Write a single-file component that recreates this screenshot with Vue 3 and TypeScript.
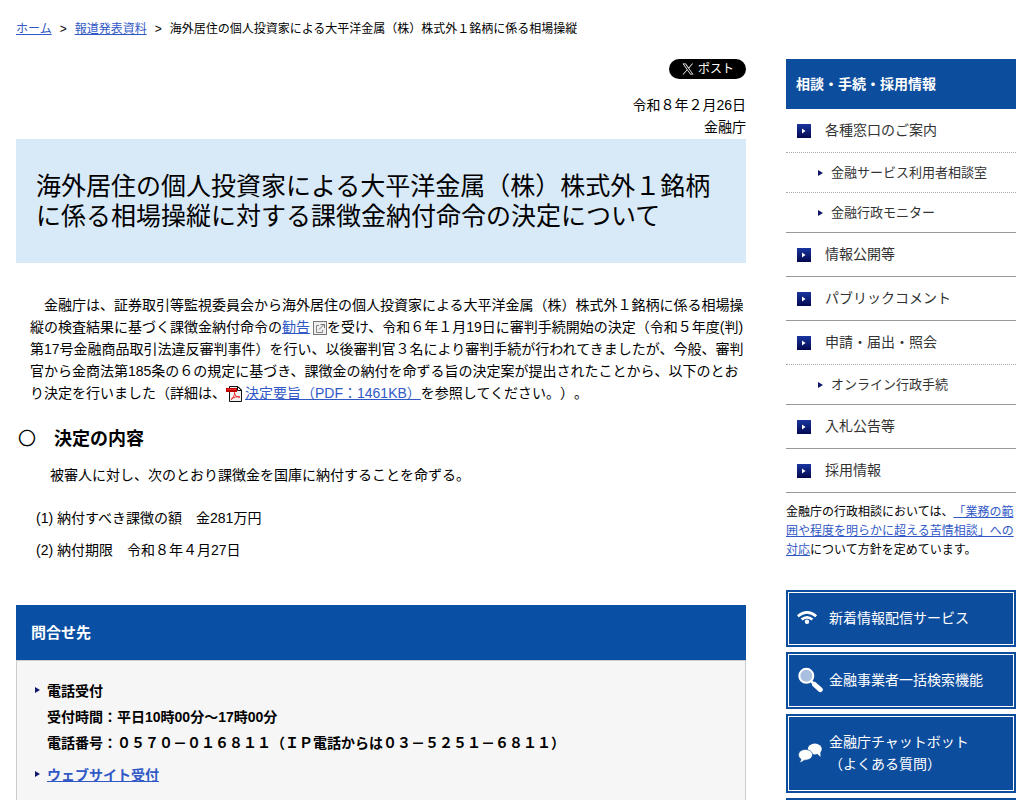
<script setup lang="ts">
interface MenuItem {
  label: string
  children: string[]
}

const menu: MenuItem[] = [
  { label: '各種窓口のご案内', children: ['金融サービス利用者相談室', '金融行政モニター'] },
  { label: '情報公開等', children: [] },
  { label: 'パブリックコメント', children: [] },
  { label: '申請・届出・照会', children: ['オンライン行政手続'] },
  { label: '入札公告等', children: [] },
  { label: '採用情報', children: [] },
]
</script>

<template>
  <div class="page">
    <nav class="crumbs" aria-label="パンくずリスト">
      <a href="#">ホーム</a><span class="sep">&gt;</span><a href="#">報道発表資料</a><span class="sep">&gt;</span><span>海外居住の個人投資家による大平洋金属（株）株式外１銘柄に係る相場操縦</span>
    </nav>

    <div class="columns">
      <main class="main">
        <div class="share">
          <button type="button" class="post">
            <svg viewBox="0 0 24 24" width="12" height="12" aria-hidden="true">
              <path fill="#fff" d="M14.1 10.3 22.3 1h-2l-7.1 8.1L7.6 1H1l8.6 12.3L1 23h2l7.5-8.6 6 8.6H23zM11.4 13.3l-.9-1.2L3.7 2.5h2.9l5.6 7.9.9 1.2 7.2 10.1h-3z" />
            </svg>
            <span>ポスト</span>
          </button>
        </div>

        <p class="date">令和８年２月26日<br />金融庁</p>

        <h1 class="title">海外居住の個人投資家による大平洋金属（株）株式外１銘柄に係る相場操縦に対する課徴金納付命令の決定について</h1>

        <p class="body">　金融庁は、証券取引等監視委員会から海外居住の個人投資家による大平洋金属（株）株式外１銘柄に係る相場操縦の検査結果に基づく課徴金納付命令の<a href="#">勧告</a><svg class="ext" viewBox="0 0 14 14" width="14" height="14" aria-hidden="true">
            <rect x=".5" y=".5" width="13" height="13" fill="#eee" stroke="#777" />
            <path d="M6 4.500H3.500V11.500H9.500V9" fill="none" stroke="#888" />
            <path d="M6 8.500L10.500 4M7.500 3.500H11.500V7" fill="none" stroke="#777" />
          </svg>を受け、令和６年１月19日に審判手続開始の決定（令和５年度(判)第17号金融商品取引法違反審判事件）を行い、以後審判官３名により審判手続が行われてきましたが、今般、審判官から金商法第185条の６の規定に基づき、課徴金の納付を命ずる旨の決定案が提出されたことから、以下のとおり決定を行いました（詳細は、<svg class="pdf" viewBox="0 0 16 16" width="16" height="16" aria-hidden="true">
            <path d="M3.500 .5H12L15.500 4V15.500H3.500z" fill="#f2f2f2" stroke="#111" />
            <path d="M11.500 .5V4.500H15.500z" fill="#fff" stroke="#111" />
            <path d="M0 2H11V6H0z" fill="#b00" />
            <path d="M1 3H10V4H1z" fill="#f22" />
            <path d="M5 13.500C7 12 9 9 8.500 6.500C9 10 11 11.500 14 11C11 10 8 11 5 13.500z" fill="none" stroke="#e22" />
          </svg><a href="#">決定要旨（PDF：1461KB）</a>を参照してください。）。</p>

        <h2 class="heading"><span class="mark">〇</span>　決定の内容</h2>
        <p class="lead">被審人に対し、次のとおり課徴金を国庫に納付することを命ずる。</p>
        <div class="terms">
          <p>(1) 納付すべき課徴の額　金281万円</p>
          <p>(2) 納付期限　令和８年４月27日</p>
        </div>

        <section class="contact">
          <h2>問合せ先</h2>
          <ul>
            <li>電話受付<br />受付時間：平日10時00分～17時00分<br />電話番号：０５７０－０１６８１１（ＩＰ電話からは０３－５２５１－６８１１）</li>
            <li><a href="#">ウェブサイト受付</a></li>
          </ul>
        </section>
      </main>

      <aside class="side">
        <h2 class="side-title">相談・手続・採用情報</h2>
        <ul class="menu">
          <li v-for="item in menu" :key="item.label">
            <a href="#" class="item">
              <svg viewBox="0 0 14 14" width="14" height="14" aria-hidden="true">
                <defs>
                  <linearGradient id="tile" x1="0" y1="0" x2="0" y2="1">
                    <stop offset="0" stop-color="#1a35a0" />
                    <stop offset="1" stop-color="#03084f" />
                  </linearGradient>
                </defs>
                <rect width="14" height="14" fill="url(#tile)" />
                <path d="M5 4.500L8.500 7L5 9.500z" fill="#fff" />
              </svg>
              <span>{{ item.label }}</span>
            </a>
            <ul v-if="item.children.length">
              <li v-for="child in item.children" :key="child">
                <a href="#" class="sub">{{ child }}</a>
              </li>
            </ul>
          </li>
        </ul>
        <p class="note">金融庁の行政相談においては、<a href="#">「業務の範囲や程度を明らかに超える苦情相談」への対応</a>について方針を定めています。</p>

        <div class="banners">
          <a href="#" class="banner">
            <svg viewBox="0 0 26 26" width="26" height="26" aria-hidden="true">
              <g fill="none" stroke="#fff" stroke-width="2.600">
                <path d="M.8 11.300Q10 3.600 19.200 11.300" />
                <path d="M4.600 14.600Q10 10 15.400 14.600" />
              </g>
              <circle cx="10" cy="16.800" r="2.200" fill="#fff" />
            </svg>
            <span>新着情報配信サービス</span>
          </a>
          <a href="#" class="banner">
            <svg viewBox="0 0 26 26" width="26" height="26" aria-hidden="true">
              <path d="M14 14L17 17" stroke="#fff" stroke-width="2.500" />
              <path d="M17.500 17.500L23.300 22.700" stroke="#fff" stroke-width="5" stroke-linecap="round" />
              <circle cx="9.300" cy="8.800" r="7" fill="#a9bfe0" stroke="#fff" stroke-width="2" />
            </svg>
            <span>金融事業者一括検索機能</span>
          </a>
          <a href="#" class="banner">
            <svg viewBox="0 0 26 26" width="26" height="26" aria-hidden="true">
              <g fill="#fff">
                <ellipse cx="17.800" cy="9" rx="7" ry="5.400" />
                <path d="M19 12.500L23.500 17L23.300 11z" />
              </g>
              <g fill="#fff" stroke="#0d4d9e" stroke-width=".7">
                <path d="M8.300 9.500C4.500 9.500 1.500 11.800 1.500 14.800C1.500 16.800 2.500 18.300 4 19.200C4 20.500 3 21.700 2 22.500C4.500 22.500 6.200 21.400 7.200 20.200C12 20.500 15.500 18 15.500 14.800C15.500 11.800 12.300 9.500 8.300 9.500z" />
              </g>
            </svg>
            <span>金融庁チャットボット<br />（よくある質問）</span>
          </a>
          <div class="banner"></div>
        </div>
      </aside>
    </div>
  </div>
</template>

<style>
body {
  margin: 0;
  background: #fff;
}
</style>

<style scoped>
.page {
  padding: 20px 16px 0;
  font-family: "Liberation Sans", "Noto Sans CJK JP", sans-serif;
  font-size: 14px;
  line-height: 22px;
  color: #000;
  text-spacing-trim: space-all;
}
h1, h2, p, ul {
  margin: 0;
  padding: 0;
}
ul {
  list-style: none;
}
a {
  color: #3159c6;
}
.crumbs {
  font-size: 12px;
  line-height: 19px;
  margin-bottom: 20px;
}
.sep {
  margin: 0 8px;
}
.columns {
  display: flex;
  gap: 40px;
  align-items: flex-start;
}
.main {
  flex: 1;
  min-width: 0;
}
.side {
  width: 230px;
  flex: none;
}
.share {
  display: flex;
  justify-content: flex-end;
}
.post {
  display: flex;
  align-items: center;
  gap: 4px;
  height: 20px;
  padding: 0 12px 0 13px;
  border: 0;
  border-radius: 10px;
  background: #000;
  color: #fff;
  font: inherit;
  font-size: 12px;
  line-height: 20px;
}
.date {
  margin-top: 15px;
  margin-bottom: 1px;
  text-align: right;
}
.title {
  padding: 32px 20px;
  background: #d8e9f8;
  font-size: 25px;
  line-height: 30px;
  font-weight: 400;
}
.body {
  margin: 31px 0 23px 14px;
}
.ext {
  margin-left: 3px;
  vertical-align: -3px;
}
.pdf {
  margin-right: 3px;
  vertical-align: -4px;
}
.heading {
  padding-left: 2px;
  font-size: 18px;
  line-height: 24px;
}
.mark {
  font-weight: 400;
}
.lead {
  margin: 13px 0 21px 34px;
}
.terms {
  display: grid;
  gap: 10px;
  margin-left: 20px;
}
.contact {
  margin-top: 44px;
}
.contact h2 {
  padding: 0 15px;
  background: #0950a4;
  color: #fff;
  font-size: 15px;
  line-height: 55px;
}
.contact ul {
  display: grid;
  gap: 6px;
  padding: 17px 17px 32px;
  border: 1px solid #ccc;
  background: #f6f6f6;
  font-weight: 700;
  line-height: 26px;
}
.contact li {
  display: flow-root;
  padding-left: 13px;
}
.contact li::before,
.sub::before {
  content: "";
  border-left: 5px solid #10186c;
  border-top: 3px solid transparent;
  border-bottom: 3px solid transparent;
}
.contact li::before {
  float: left;
  margin: 9px 0 0 -12px;
}
.side-title {
  padding: 0 10px;
  background: #0d4d9e;
  color: #fff;
  font-size: 14px;
  line-height: 50px;
}
.menu > li {
  border-bottom: 1px solid #999;
}
.item,
.sub {
  display: flex;
  align-items: center;
  color: #333;
  text-decoration: none;
}
.item {
  gap: 14px;
  padding-left: 11px;
  line-height: 43px;
}
.sub {
  gap: 8px;
  padding-left: 32px;
  border-top: 1px dotted #aaa;
  font-size: 13px;
  line-height: 39px;
}
.note {
  margin: 10px 0 30px;
  font-size: 12px;
  line-height: 19px;
}
.banners {
  display: grid;
  gap: 5px;
}
.banner {
  display: flex;
  align-items: center;
  gap: 6px;
  padding: 17px 11px 18px;
  background: #0d4d9e;
  outline: 1px solid #fff;
  outline-offset: -3px;
  color: #fff;
  text-decoration: none;
}
.banner svg {
  flex: none;
  margin: -2px 0;
}
</style>
